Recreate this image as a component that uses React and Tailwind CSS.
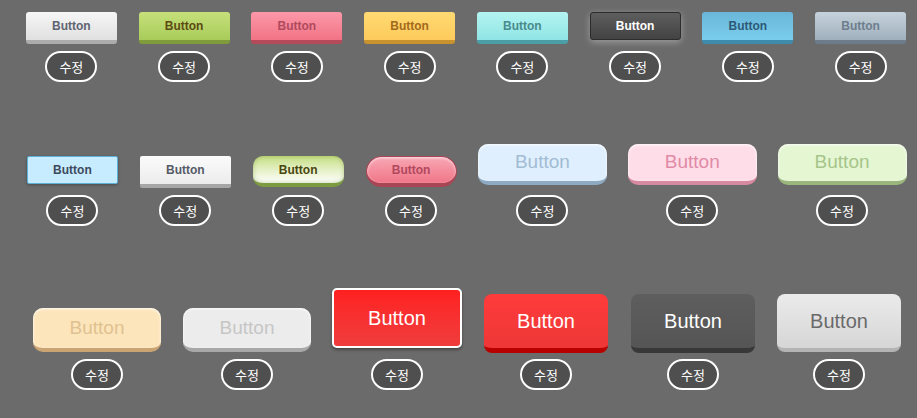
import React from "react";

const font = { fontFamily: '"Liberation Sans", Arial, sans-serif' };

function Edit() {
  return (
    <button
      className="flex h-[31px] w-[52px] items-center justify-center rounded-full border-2 border-white bg-[#4f4f4f] text-[13px] font-normal text-white"
      style={{ fontFamily: '"Noto Sans CJK KR", sans-serif' }}
    >
      수정
    </button>
  );
}

function Cell({ w, children }) {
  return (
    <div className={`flex flex-col items-center ${w}`}>
      {children}
      <Edit />
    </div>
  );
}

export default function App() {
  return (
    <div className="min-h-[418px] w-[917px] overflow-hidden bg-[#6b6b6b]" style={font}>
      {/* row 1 */}
      <div className="mt-[12px] flex items-end pl-[15px]">
        <Cell w="w-[113px]">
          <button className="mb-[7px] h-[32px] w-[91px] rounded-[3px] border-b-4 border-[#acacac] bg-gradient-to-b from-[#f6f6f6] to-[#e0e0e0] text-[12px] font-bold text-[#5f6470]">
            Button
          </button>
        </Cell>
        <Cell w="w-[113px]">
          <button className="mb-[7px] h-[32px] w-[91px] rounded-[3px] border-b-4 border-[#7f9b3c] bg-gradient-to-b from-[#c6e07a] to-[#a8cc5a] text-[12px] font-bold text-[#5c4a12]">
            Button
          </button>
        </Cell>
        <Cell w="w-[113px]">
          <button className="mb-[7px] h-[32px] w-[91px] rounded-[3px] border-b-4 border-[#b44a5a] bg-gradient-to-b from-[#fb98a9] to-[#f17385] text-[12px] font-bold text-[#b04a5e]">
            Button
          </button>
        </Cell>
        <Cell w="w-[113px]">
          <button className="mb-[7px] h-[32px] w-[91px] rounded-[3px] border-b-4 border-[#c8932f] bg-gradient-to-b from-[#ffda72] to-[#fdca5c] text-[12px] font-bold text-[#a3691a]">
            Button
          </button>
        </Cell>
        <Cell w="w-[113px]">
          <button className="mb-[7px] h-[32px] w-[91px] rounded-[3px] border-b-4 border-[#4c9ea6] bg-gradient-to-b from-[#b4f4f2] to-[#8ee5e4] text-[12px] font-bold text-[#4a8a8c]">
            Button
          </button>
        </Cell>
        <Cell w="w-[113px]">
          <button className="mb-[11px] h-[28px] w-[91px] rounded-[3px] border border-[#2c2c2c] bg-gradient-to-b from-[#5e5e5e] to-[#434343] text-[12px] font-bold text-white shadow-[0_2px_7px_rgba(255,255,255,0.35)]">
            Button
          </button>
        </Cell>
        <Cell w="w-[113px]">
          <button className="mb-[7px] h-[32px] w-[91px] rounded-[3px] border-b-4 border-[#3e8bab] bg-gradient-to-b from-[#6ab6d8] to-[#7acdee] text-[12px] font-bold text-[#2c5a76]">
            Button
          </button>
        </Cell>
        <Cell w="w-[113px]">
          <button className="mb-[7px] h-[32px] w-[91px] rounded-[3px] border-b-4 border-[#6c7c8a] bg-gradient-to-b from-[#c6d2db] to-[#9fb0bd] text-[12px] font-bold text-[#6d7e8d]">
            Button
          </button>
        </Cell>
      </div>

      {/* row 2 */}
      <div className="mt-[62px] flex items-end pl-[16px]">
        <Cell w="w-[113px]">
          <button className="mb-[11px] h-[28px] w-[91px] rounded-[2px] border border-[#5ab0d6] bg-[#c8ecff] text-[12px] font-bold text-[#3c4a5c] shadow-[0_1px_3px_rgba(0,0,0,0.3)]">
            Button
          </button>
        </Cell>
        <Cell w="w-[113px]">
          <button className="mb-[7px] h-[32px] w-[91px] rounded-[2px] border-b-4 border-[#a6a6a6] bg-gradient-to-b from-[#fbfbfb] to-[#ececec] text-[12px] font-bold text-[#555b66]">
            Button
          </button>
        </Cell>
        <Cell w="w-[113px]">
          <button className="mb-[8px] h-[31px] w-[91px] rounded-[10px] border-b-4 border-[#7c9a40] bg-gradient-to-b from-[#c6de82] via-[#e4f0c4] to-[#ffffff] text-[12px] font-bold text-[#4a4610] shadow-[inset_0_0_4px_rgba(120,150,60,0.5)]">
            Button
          </button>
        </Cell>
        <Cell w="w-[113px]">
          <button className="mb-[8px] h-[31px] w-[91px] rounded-full border border-b-4 border-[#a84656] bg-gradient-to-b from-[#f7a7b4] to-[#f07588] text-[12px] font-bold text-[#b2485e] shadow-[inset_0_1px_3px_rgba(255,255,255,0.7)]">
            Button
          </button>
        </Cell>
        <Cell w="w-[150px]">
          <button className="mb-[10px] h-[41px] w-[129px] rounded-[10px] border-b-4 border-[#8ea9c2] bg-[#dfeffd] text-[19px] text-[#a2bcd4] shadow-[inset_0_1px_3px_rgba(255,255,255,0.9)]">
            Button
          </button>
        </Cell>
        <Cell w="w-[150px]">
          <button className="mb-[10px] h-[41px] w-[129px] rounded-[10px] border-b-4 border-[#d58aa0] bg-[#ffdde8] text-[19px] text-[#e18aa6] shadow-[inset_0_1px_3px_rgba(255,255,255,0.9)]">
            Button
          </button>
        </Cell>
        <Cell w="w-[150px]">
          <button className="mb-[10px] h-[41px] w-[129px] rounded-[10px] border-b-4 border-[#9bb67c] bg-[#e4f6d2] text-[19px] text-[#a6c58a] shadow-[inset_0_1px_3px_rgba(255,255,255,0.9)]">
            Button
          </button>
        </Cell>
      </div>

      {/* row 3 */}
      <div className="mt-[62px] flex items-end pl-[22px]">
        <Cell w="w-[150px]">
          <button className="mb-[7px] h-[44px] w-[128px] rounded-[10px] border-b-4 border-[#caa473] bg-[#fde5bb] text-[19px] text-[#e0c190] shadow-[inset_0_1px_3px_rgba(255,255,255,0.9)]">
            Button
          </button>
        </Cell>
        <Cell w="w-[150px]">
          <button className="mb-[7px] h-[44px] w-[128px] rounded-[10px] border-b-4 border-[#a8a8a8] bg-[#ececec] text-[19px] text-[#c6c6c6] shadow-[inset_0_1px_3px_rgba(255,255,255,0.9)]">
            Button
          </button>
        </Cell>
        <Cell w="w-[150px]">
          <button className="mb-[11px] h-[60px] w-[130px] rounded-[5px] border-2 border-white bg-gradient-to-b from-[#ff2020] to-[#ef3c3c] text-[20px] text-white shadow-[0_2px_3px_rgba(0,0,0,0.35)]">
            Button
          </button>
        </Cell>
        <Cell w="w-[148px]">
          <button className="mb-[6px] h-[59px] w-[124px] rounded-[8px] border-b-[5px] border-[#b80000] bg-gradient-to-b from-[#ff3b3b] to-[#ee3737] text-[20px] text-white">
            Button
          </button>
        </Cell>
        <Cell w="w-[146px]">
          <button className="mb-[6px] h-[59px] w-[124px] rounded-[8px] border-b-[5px] border-[#383838] bg-gradient-to-b from-[#5e5e5e] to-[#555555] text-[20px] text-white">
            Button
          </button>
        </Cell>
        <Cell w="w-[146px]">
          <button className="mb-[7px] h-[58px] w-[124px] rounded-[8px] border-b-4 border-[#b4b4b4] bg-gradient-to-b from-[#ebebeb] to-[#d6d6d6] text-[20px] text-[#6a6a6a]">
            Button
          </button>
        </Cell>
      </div>
    </div>
  );
}
